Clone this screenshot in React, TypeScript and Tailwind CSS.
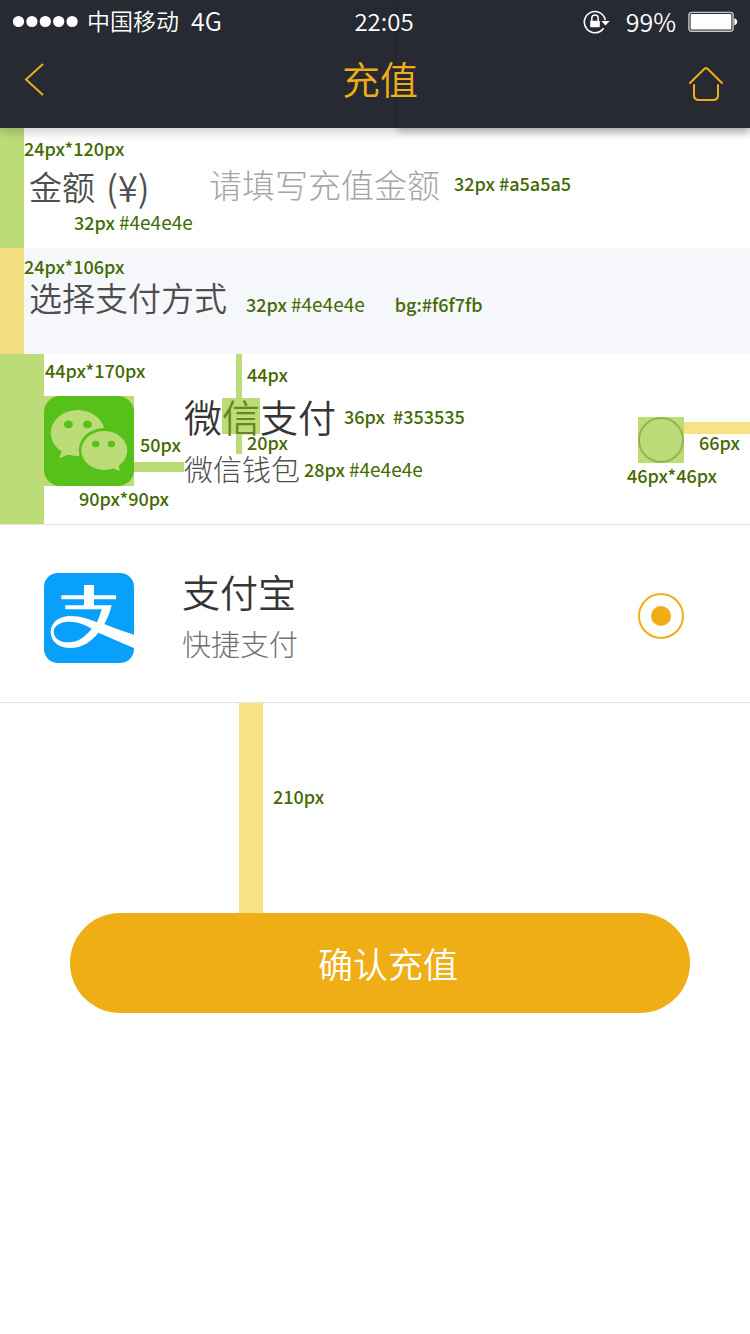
import { useState, type ReactNode } from "react";

function Note({ className = "", children }: { className?: string; children: ReactNode }) {
  return (
    <span
      className={`pointer-events-none block text-[18px] font-medium whitespace-pre text-[#446a00] ${className}`}
    >
      {children}
    </span>
  );
}

function Swatch({ className }: { className: string }) {
  return <div aria-hidden="true" className={`shrink-0 ${className}`} />;
}

function RotationLockIcon() {
  return (
    <svg width="27" height="26" viewBox="0 0 27 26" fill="none" aria-hidden="true">
      <path d="M20.6 19.2A10.6 10.6 0 1 1 22.3 11" stroke="#fff" strokeWidth="1.6" />
      <path d="M18.4 12h8.2l-4.1 4.6z" fill="#fff" />
      <path d="M8.8 12.5V9.2a3.2 3.2 0 0 1 6.4 0v3.3" stroke="#fff" strokeWidth="1.5" />
      <rect x="7.2" y="11.8" width="9.6" height="6.4" rx="0.6" fill="#fff" />
    </svg>
  );
}

function BatteryIcon() {
  return (
    <svg width="50" height="22" viewBox="0 0 50 22" fill="none" aria-hidden="true">
      <rect x="0.9" y="1.4" width="44.2" height="18.8" rx="2.6" stroke="#c9cacc" strokeWidth="1.4" />
      <rect x="2.6" y="3" width="40.8" height="15.6" rx="1" fill="#fff" />
      <path d="M46.3 7.2c2 .6 2.9 1.8 2.9 3.6s-.9 3-2.9 3.6z" fill="#fff" />
    </svg>
  );
}

function WechatLogo() {
  return (
    <svg width="90" height="90" viewBox="0 0 90 90" aria-hidden="true">
      <rect width="90" height="90" rx="16" fill="#58c01a" />
      <g fill="#bcdc78">
        <ellipse cx="33.7" cy="37" rx="27" ry="23" />
        <path d="M18.5 53 15.2 62.2 27 57.5z" />
      </g>
      <ellipse cx="60.3" cy="54.3" rx="25.5" ry="22.3" fill="#58c01a" />
      <g fill="#bcdc78">
        <ellipse cx="60.3" cy="54.5" rx="22.9" ry="19.6" />
        <path d="M74.5 67.5 75.7 75 67.5 71.5z" />
      </g>
      <g fill="#58c01a">
        <ellipse cx="24.4" cy="28.4" rx="4.5" ry="3.9" />
        <ellipse cx="43.4" cy="28.4" rx="4.5" ry="3.9" />
        <ellipse cx="51.7" cy="48" rx="3.7" ry="3.2" />
        <ellipse cx="67.4" cy="48" rx="3.7" ry="3.2" />
      </g>
    </svg>
  );
}

function AlipayLogo() {
  return (
    <svg width="90" height="90" viewBox="0 0 270 270" className="shrink-0" aria-hidden="true">
      <rect width="270" height="270" rx="42" fill="#08a0fb" />
      <path
        d="M120 36h30v31h66v12h-66v18h53c-4 19-12 39-22 56 29 12 60 23 89 32v40c-33-14-73-31-107-46-20 24-44 46-85 46-34 0-58-20-58-48 0-29 26-48 59-48 29 0 55 9 80 19 6-13 10-26 14-39H64V97h56V79H52V67h68z"
        fill="#fff"
      />
      <path
        d="M143 168c-17-13-44-23-70-22-25 1-44 12-44 30 0 19 18 32 44 32 33 0 51-19 70-40z"
        fill="#08a0fb"
      />
    </svg>
  );
}

interface RadioProps {
  id: string;
  checked: boolean;
  onSelect: () => void;
}

function Radio({ id, checked, onSelect }: RadioProps) {
  return (
    <input
      id={id}
      type="radio"
      name="method"
      checked={checked}
      onChange={onSelect}
      className="grid size-[46px] shrink-0 appearance-none place-items-center rounded-full border-2 border-[#95b352] before:size-5 before:rounded-full checked:border-[#efae15] checked:before:bg-[#efae15]"
    />
  );
}

export default function App() {
  const [method, setMethod] = useState("alipay");
  const [amount, setAmount] = useState("");

  return (
    <div className="min-h-screen bg-white font-['Noto_Sans_CJK_SC',sans-serif]">
      <header className="relative z-10 h-32 bg-[#282a33] shadow-[0_4px_10px_rgba(0,0,0,0.2)]">
        <div className="absolute inset-y-0 right-0 left-[53%] bg-[#282a33] shadow-[0_4px_7px_rgba(0,0,0,0.2)]" />
        <div className="relative grid h-11 grid-cols-[1fr_auto_1fr] items-center px-3 text-white">
          <div className="flex items-center gap-2">
            <svg width="67" height="14" viewBox="0 0 67 14" fill="#fff" aria-hidden="true">
              <circle cx="6.5" cy="6.5" r="5.6" />
              <circle cx="19.9" cy="6.5" r="5.6" />
              <circle cx="33.3" cy="6.5" r="5.6" />
              <circle cx="46.7" cy="6.5" r="5.6" />
              <circle cx="60.1" cy="6.5" r="5.6" />
            </svg>
            <span className="pb-1 text-[23px] leading-8 font-[350]">中国移动</span>
            <span className="ml-1 pb-1 text-[25px] leading-8 font-[350]">4G</span>
          </div>
          <span className="pb-[2px] pl-[18px] text-[24px] leading-8 font-[350]">22:05</span>
          <div className="flex items-center justify-end">
            <RotationLockIcon />
            <span className="mr-3 ml-4 pb-[2px] text-[25px] leading-8 font-[350]">99%</span>
            <BatteryIcon />
          </div>
        </div>
        <div className="relative grid h-[72px] grid-cols-[1fr_auto_1fr] items-center pr-[26px] pl-6">
          <button type="button" aria-label="返回" className="justify-self-start">
            <svg width="20" height="34" viewBox="0 0 20 34" fill="none" stroke="#efae15" strokeWidth="2">
              <path d="M19 1 2 16.5 19 32" />
            </svg>
          </button>
          <h1 className="pb-1 pl-3 text-[38px] leading-[56px] font-[350] text-[#efae15]">充值</h1>
          <a href="#home" aria-label="首页" className="justify-self-end pt-2">
            <svg width="36" height="36" viewBox="0 0 36 36" fill="none" stroke="#efae15" strokeWidth="2" strokeLinecap="round">
              <path d="M2 17 16.5 2.8q1.5-1.5 3 0L34 17" />
              <path d="M6 19v10q0 5 5 5h14q5 0 5-5V19" />
            </svg>
          </a>
        </div>
      </header>

      <main>
        <section className="flex min-h-[120px]">
          <Swatch className="w-6 bg-[#bcdc78]" />
          <div className="w-[185px] shrink-0 pt-2">
            <Note className="leading-6">24px*120px</Note>
            <label
              htmlFor="amount"
              className="flex gap-[11px] pl-[5px] text-[33px] leading-[52px] font-[350] text-[#4e4e4e]"
            >
              金额 <span className="text-[36px]">(¥)</span>
            </label>
            <Note className="pl-[50px] leading-5">
              32px <span className="text-[19px] font-normal">#4e4e4e</span>
            </Note>
          </div>
          <div className="flex h-28 flex-1 items-center gap-[9px]">
            <input
              id="amount"
              inputMode="decimal"
              placeholder="请填写充值金额"
              value={amount}
              onChange={(e) => setAmount(e.target.value)}
              className="h-[50px] w-[236px] text-[33px] leading-[50px] font-light text-[#4e4e4e] outline-none placeholder:text-[#a5a5a5]"
            />
            <Note className="pb-[2px] leading-6">32px #a5a5a5</Note>
          </div>
        </section>

        <section className="flex min-h-[106px] bg-[#f6f7fb]">
          <Swatch className="w-6 bg-[#f5e081]" />
          <div className="pt-2">
            <Note className="leading-5">24px*106px</Note>
            <div className="flex items-start pl-[5px]">
              <h2 className="text-[33px] leading-[42px] font-[350] text-[#4e4e4e]">选择支付方式</h2>
              <Note className="pt-4 pl-[19px] leading-6">
                32px <span className="text-[19px] font-normal">#4e4e4e</span>
              </Note>
              <Note className="pt-4 pl-[30px] leading-6">bg:#f6f7fb</Note>
            </div>
          </div>
        </section>

        <section className="flex border-b border-[#e2e2e2]">
          <Swatch className="h-[170px] w-11 bg-[#bcdc78]" />
          <div className="w-[90px] shrink-0">
            <Note className="h-[42px] pt-1 pl-px leading-6">44px*170px</Note>
            <div className="bg-[#bcdc78]">
              <WechatLogo />
            </div>
            <Note className="pl-[35px] leading-6">90px*90px</Note>
          </div>
          <div className="w-[50px] shrink-0 pt-20">
            <Note className="h-7 pl-[6px] leading-5">50px</Note>
            <Swatch className="h-[10px] bg-[#bcdc78]" />
          </div>
          <div className="flex-1">
            <div className="flex h-11 pl-[52px]">
              <Swatch className="w-[6px] bg-[#bcdc78]" />
              <Note className="pt-[10px] pl-[5px] leading-5">44px</Note>
            </div>
            <div className="flex h-9 items-center">
              <label htmlFor="wechat" className="text-[38px] leading-9 font-[350] text-[#353535]">
                微<mark className="inline-block bg-[#bcdc78] text-[#678524]">信</mark>支付
              </label>
              <Note className="pl-2 leading-6">{"36px  #353535"}</Note>
            </div>
            <div className="flex h-5 pl-[52px]">
              <Swatch className="w-[6px] bg-[#bcdc78]" />
              <Note className="pl-[5px] leading-4">20px</Note>
            </div>
            <div className="flex items-center">
              <span className="text-[29px] leading-7 font-light text-[#4e4e4e]">微信钱包</span>
              <Note className="pt-[2px] pl-1 leading-6">
                28px <span className="text-[19px] font-normal">#4e4e4e</span>
              </Note>
            </div>
          </div>
          <div className="w-[57px] shrink-0 pt-[63px]">
            <div className="ml-[11px] bg-[#bcdc78]">
              <Radio id="wechat" checked={method === "wechat"} onSelect={() => setMethod("wechat")} />
            </div>
            <Note className="leading-6">46px*46px</Note>
          </div>
          <div className="w-[66px] shrink-0 pt-[68px]">
            <Swatch className="h-3 bg-[#f7e384]" />
            <Note className="pl-[15px] leading-4">66px</Note>
          </div>
        </section>

        <section className="flex items-start border-b border-[#e2e2e2] pt-12 pr-[66px] pb-[39px] pl-11">
          <AlipayLogo />
          <label htmlFor="alipay" className="ml-12 flex flex-1 flex-col gap-5">
            <span className="text-[38px] leading-9 font-[350] text-[#353535]">支付宝</span>
            <span className="text-[29px] leading-7 font-light text-[#6f7074]">快捷支付</span>
          </label>
          <div className="pt-5">
            <Radio id="alipay" checked={method === "alipay"} onSelect={() => setMethod("alipay")} />
          </div>
        </section>

        <div className="flex h-[210px] items-center pl-[239px]">
          <Swatch className="h-full w-6 bg-[#f7e384]" />
          <Note className="pb-6 pl-[10px] leading-6">210px</Note>
        </div>
        <div className="pr-[60px] pl-[70px]">
          <button
            type="button"
            className="h-[100px] w-full rounded-full bg-[#efae15] pl-4 text-[35px] leading-[50px] font-[350] text-white"
          >
            确认充值
          </button>
        </div>
      </main>
    </div>
  );
}
